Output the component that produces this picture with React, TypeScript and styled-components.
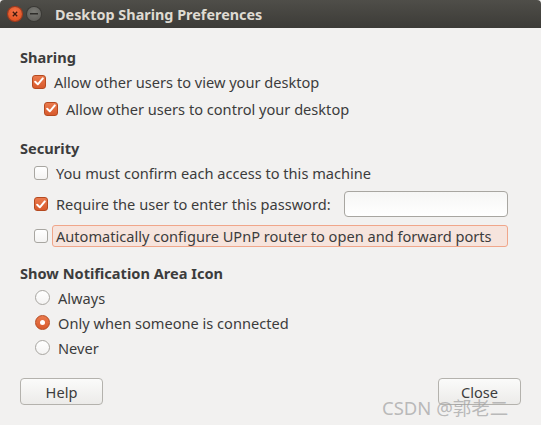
import React from 'react';
import styled, { createGlobalStyle } from 'styled-components';

const GlobalStyle = createGlobalStyle`
    html, body {
        margin: 0;
        padding: 0;
        background: #f2f1f0;
    }
    body {
        font-family: 'Noto Sans', 'DejaVu Sans', sans-serif;
        color: #3c3c3c;
        font-size: 14.6px;
    }
`;

const Window = styled.div`
    position: relative;
    width: 541px;
    height: 425px;
    background: #f2f1f0;
    overflow: hidden;
`;

const TitleBar = styled.div`
    height: 28px;
    display: flex;
    align-items: center;
    padding-left: 8px;
    gap: 5px;
    background: linear-gradient(#4f4e49, #3c3b37);
    border-radius: 4px 4px 0 0;
`;

const WinButton = styled.div<{ $kind: 'close' | 'min' }>`
    width: 14px;
    height: 14px;
    border-radius: 50%;
    display: flex;
    align-items: center;
    justify-content: center;
    background: ${p =>
        p.$kind === 'close'
            ? 'radial-gradient(circle at 50% 35%, #f5744a, #dd4814)'
            : 'radial-gradient(circle at 50% 35%, #7a7a75, #5a5955)'};
    box-shadow: 0 0 0 1px ${p => (p.$kind === 'close' ? '#a8381a' : '#3a3935')};
`;

const Title = styled.span`
    margin-left: 9px;
    font-weight: bold;
    font-size: 14.4px;
    color: #dfdbd2;
`;

const Content = styled.div`
    padding: 19px 33px 0 20px;
    display: flex;
    flex-direction: column;
`;

const Section = styled.div<{ $gap?: number }>`
    display: flex;
    flex-direction: column;
    margin-bottom: ${p => p.$gap ?? 12}px;
`;

const Heading = styled.div`
    font-weight: bold;
    line-height: 20px;
    height: 20px;
    margin-bottom: 2px;
`;

const Row = styled.label<{ $indent: number; $height?: number }>`
    display: flex;
    align-items: center;
    height: ${p => p.$height ?? 25}px;
    padding-left: ${p => p.$indent}px;
    gap: 8px;
    line-height: 20px;
`;

const Box = styled.span<{ $checked?: boolean }>`
    width: 14px;
    height: 14px;
    flex: none;
    border-radius: 3px;
    box-sizing: border-box;
    display: flex;
    align-items: center;
    justify-content: center;
    border: 1px solid ${p => (p.$checked ? '#b54a20' : '#a8a6a1')};
    background: ${p => (p.$checked ? 'linear-gradient(#ea7a4d, #d85a2c)' : 'linear-gradient(#ffffff, #f4f3f2)')};
`;

const Radio = styled.span<{ $checked?: boolean }>`
    width: 15px;
    height: 15px;
    flex: none;
    border-radius: 50%;
    box-sizing: border-box;
    display: flex;
    align-items: center;
    justify-content: center;
    border: 1px solid ${p => (p.$checked ? '#b54a20' : '#a8a6a1')};
    background: ${p => (p.$checked ? 'linear-gradient(#ea7a4d, #d85a2c)' : 'linear-gradient(#ffffff, #f4f3f2)')};
`;

const Dot = styled.span`
    width: 5px;
    height: 5px;
    border-radius: 50%;
    background: #ffffff;
`;

const Label = styled.span<{ $highlight?: boolean }>`
    white-space: nowrap;
    ${p =>
        p.$highlight &&
        `
        flex: 1;
        margin-left: -4px;
        padding: 0 3px;
        line-height: 20px;
        background: #f6e4dd;
        border: 1px solid #f0a68a;
        border-radius: 3px;
    `}
`;

const Entry = styled.span`
    margin-left: auto;
    width: 164px;
    height: 26px;
    box-sizing: border-box;
    border: 1px solid #a8a6a1;
    border-radius: 4px;
    background: linear-gradient(#f6f6f5, #ffffff);
`;

const Footer = styled.div`
    display: flex;
    justify-content: space-between;
    padding: 0 20px;
    margin-top: 18px;
`;

const Button = styled.button`
    width: 83px;
    height: 27px;
    font-family: inherit;
    font-size: 14.6px;
    color: #3c3c3c;
    border: 1px solid #b4b2ad;
    border-radius: 4px;
    background: linear-gradient(#fbfbfa, #ecebe9);
    padding: 0;
`;

const Watermark = styled.div`
    position: absolute;
    left: 382px;
    top: 394px;
    font-family: 'Noto Sans', 'Noto Sans CJK SC', sans-serif;
    font-size: 18.5px;
    color: rgba(160, 160, 160, 0.7);
    pointer-events: none;
`;

const Check = () => (
    <svg width="10" height="9" viewBox="0 0 10 9">
        <path d="M1.2 4.8 L3.8 7.3 L8.8 1.4" fill="none" stroke="#fff" strokeWidth="2" strokeLinecap="round" strokeLinejoin="round" />
    </svg>
);

const CheckBox = ({ checked }: { checked?: boolean }) => <Box $checked={checked}>{checked && <Check />}</Box>;

const RadioButton = ({ checked }: { checked?: boolean }) => <Radio $checked={checked}>{checked && <Dot />}</Radio>;

export default function App() {
    return (
        <Window>
            <GlobalStyle />
            <TitleBar>
                <WinButton $kind="close">
                    <svg width="6" height="6" viewBox="0 0 6 6">
                        <path d="M0.8 0.8 L5.2 5.2 M5.2 0.8 L0.8 5.2" stroke="#3c1a0e" strokeWidth="1.3" />
                    </svg>
                </WinButton>
                <WinButton $kind="min">
                    <svg width="8" height="2" viewBox="0 0 8 2">
                        <rect width="8" height="1.5" fill="#2e2d2a" />
                    </svg>
                </WinButton>
                <Title>Desktop Sharing Preferences</Title>
            </TitleBar>
            <Content>
                <Section $gap={15}>
                    <Heading>Sharing</Heading>
                    <Row $indent={12}>
                        <CheckBox checked />
                        <Label>Allow other users to view your desktop</Label>
                    </Row>
                    <Row $indent={24} $height={29}>
                        <CheckBox checked />
                        <Label>Allow other users to control your desktop</Label>
                    </Row>
                </Section>
                <Section $gap={13}>
                    <Heading>Security</Heading>
                    <Row $indent={14} $height={26}>
                        <CheckBox />
                        <Label>You must confirm each access to this machine</Label>
                    </Row>
                    <Row $indent={14} $height={36}>
                        <CheckBox checked />
                        <Label>Require the user to enter this password:</Label>
                        <Entry />
                    </Row>
                    <Row $indent={14} $height={28}>
                        <CheckBox />
                        <Label $highlight>Automatically configure UPnP router to open and forward ports</Label>
                    </Row>
                </Section>
                <Section $gap={0}>
                    <Heading>Show Notification Area Icon</Heading>
                    <Row $indent={15}>
                        <RadioButton />
                        <Label>Always</Label>
                    </Row>
                    <Row $indent={15}>
                        <RadioButton checked />
                        <Label>Only when someone is connected</Label>
                    </Row>
                    <Row $indent={15}>
                        <RadioButton />
                        <Label>Never</Label>
                    </Row>
                </Section>
            </Content>
            <Footer>
                <Button>Help</Button>
                <Button>Close</Button>
            </Footer>
            <Watermark>CSDN @郭老二</Watermark>
        </Window>
    );
}
